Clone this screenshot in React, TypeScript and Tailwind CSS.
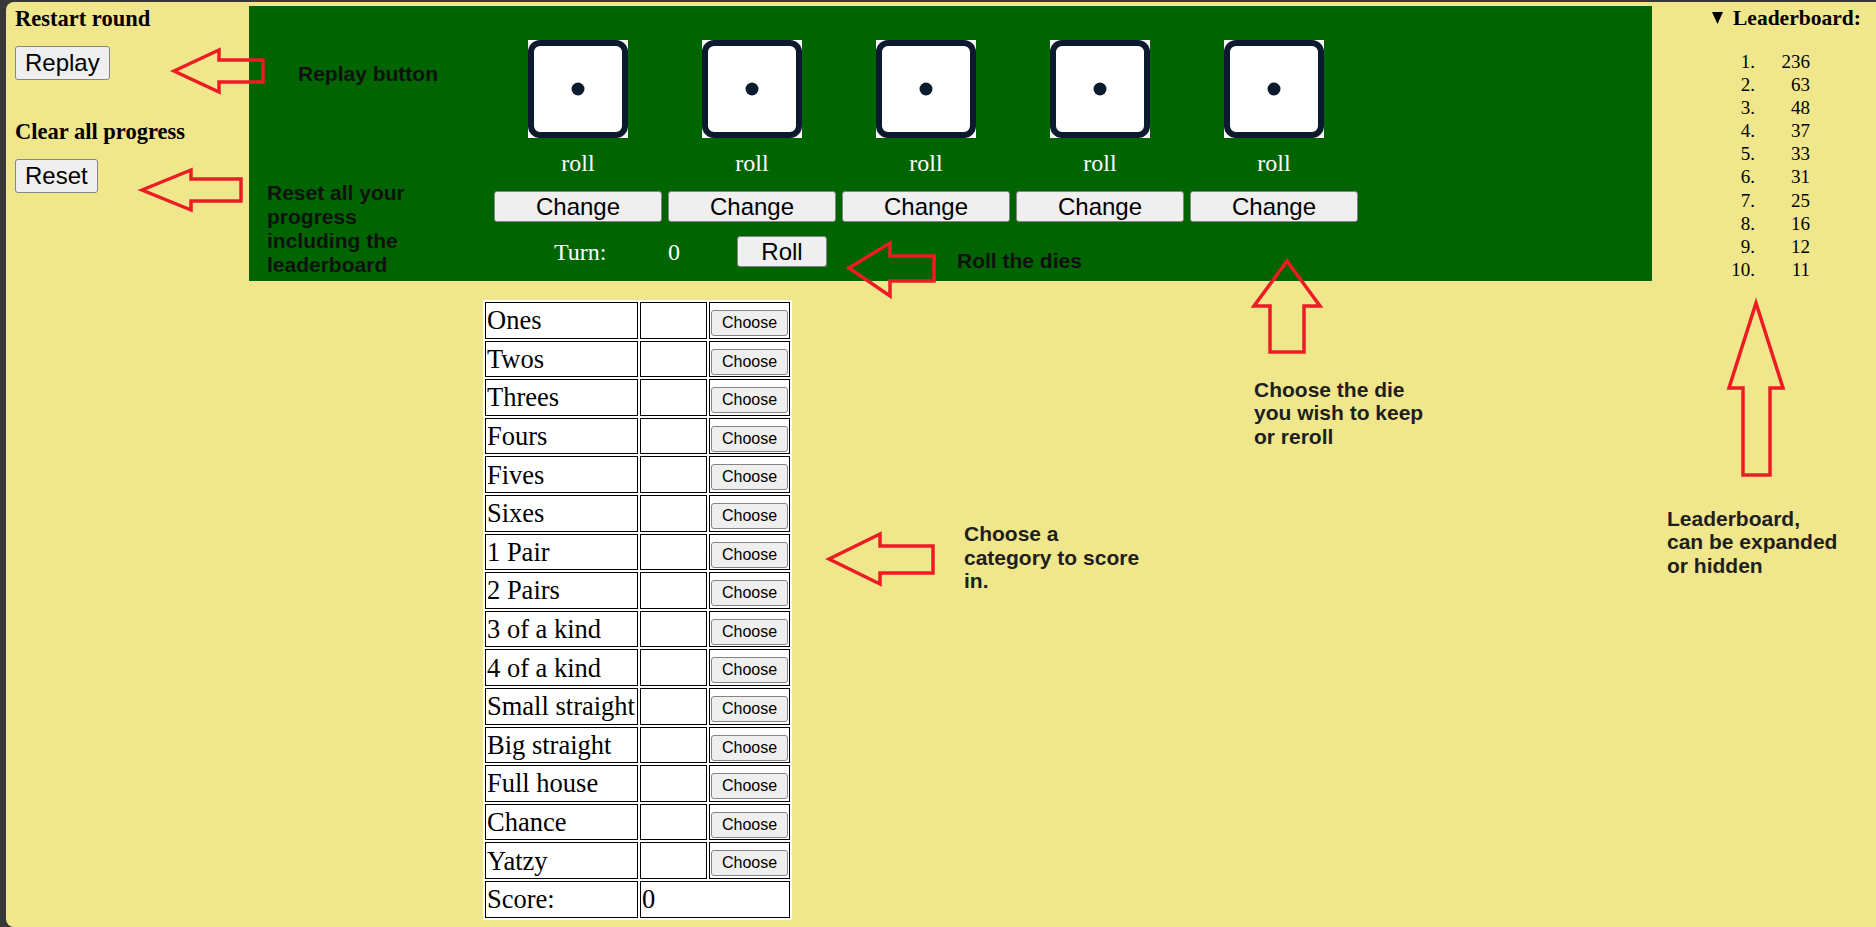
import React from 'react';

const scores = [236, 63, 48, 37, 33, 31, 25, 16, 12, 11];

const categories = [
  'Ones',
  'Twos',
  'Threes',
  'Fours',
  'Fives',
  'Sixes',
  '1 Pair',
  '2 Pairs',
  '3 of a kind',
  '4 of a kind',
  'Small straight',
  'Big straight',
  'Full house',
  'Chance',
  'Yatzy',
];

const btn =
  "bg-[#efefef] border border-[#858585] rounded-[3px] font-['Liberation_Sans',Arial,sans-serif] text-black";

function Die() {
  return (
    <svg width="100" height="98" viewBox="0 0 100 98">
      <rect width="100" height="98" fill="#ffffff" />
      <rect x="3" y="3" width="94" height="92" rx="9" fill="#ffffff" stroke="#0c1a2e" strokeWidth="6" />
      <circle cx="50" cy="49" r="6.5" fill="#0c1a2e" />
    </svg>
  );
}

function Arrows() {
  return (
    <svg className="pointer-events-none absolute left-0 top-0" width="1876" height="927" viewBox="0 0 1876 927">
      <g fill="none" stroke="#ed1c24" strokeWidth="3.5" strokeLinejoin="miter">
        {/* replay */}
        <polygon points="174,71 219,50 219,60 263,60 263,82 219,82 219,92" />
        {/* reset */}
        <polygon points="142,190 191,170 191,179 241,179 241,201 191,201 191,210" />
        {/* roll */}
        <polygon points="849,268 890,243 890,256 934,256 934,281 890,281 890,296" />
        {/* dice */}
        <polygon points="1287,261 1320,306 1304,306 1304,352 1270,352 1270,306 1254,306" />
        {/* category */}
        <polygon points="829,559 880,534 880,546 933,546 933,573 880,573 880,584" />
        {/* leaderboard */}
        <polygon points="1756,303 1783,388 1770,388 1770,475 1743,475 1743,388 1729,388" />
      </g>
    </svg>
  );
}

export default function App() {
  return (
    <div className="relative h-[927px] w-[1876px] overflow-hidden bg-[#383838] pl-[6px] pt-[2px] font-['Liberation_Serif','Times_New_Roman',serif] text-black">
      <div className="h-full rounded-bl-[8px] rounded-tl-[8px] bg-[#f0e68c]">
        <div className="flex h-[279px]">
          {/* left controls */}
          <div className="w-[243px] shrink-0 pl-[9px] pt-[4.4px]">
            <h3 className="text-[22.5px] font-bold leading-[26px]">Restart round</h3>
            <button className={`${btn} mt-[13.6px] block h-[34px] px-[9px] text-[24px] leading-[28px]`}>Replay</button>
            <h3 className="mt-[39.4px] text-[22.5px] font-bold leading-[26px]">Clear all progress</h3>
            <button className={`${btn} mt-[13.6px] block h-[34px] px-[9px] text-[24px] leading-[28px]`}>Reset</button>
          </div>

          {/* board */}
          <div className="mt-[4px] h-[275px] w-[1403px] shrink-0 bg-[#006400] pl-[245px] pt-[34px]">
            <div className="flex gap-[6px]">
              {[0, 1, 2, 3, 4].map((i) => (
                <div key={i} className="flex w-[168px] flex-col items-center">
                  <Die />
                  <div className="mt-[11px] text-[24px] leading-[28px] text-white">roll</div>
                  <button className={`${btn} mt-[14px] h-[31px] w-[168px] rounded-[2px] text-[24px] leading-[28px]`}>
                    Change
                  </button>
                </div>
              ))}
            </div>
            <div className="mt-[14px] flex h-[31px] items-center pl-[60px] text-[24px] leading-[28px] text-white">
              <span className="w-[114px]">Turn:</span>
              <span className="w-[69px]">0</span>
              <button className={`${btn} h-[31px] w-[90px] rounded-[2px] text-[24px] leading-[28px]`}>Roll</button>
            </div>
          </div>

          {/* leaderboard */}
          <div className="ml-[60px] shrink-0 pt-[2.7px]">
            <div className="flex h-[26px] items-center">
              <svg width="11" height="12" viewBox="0 0 11 12">
                <polygon points="0,0 11,0 5.5,12" fill="#000" />
              </svg>
              <span className="ml-[10px] whitespace-nowrap text-[21.5px] font-bold leading-[26px]">Leaderboard:</span>
            </div>
            <div className="mt-[19.3px] grid grid-cols-[43px_55px] text-right text-[19px] leading-[23.1px]">
              {scores.map((s, i) => (
                <React.Fragment key={i}>
                  <span>{i + 1}.</span>
                  <span>{s}</span>
                </React.Fragment>
              ))}
            </div>
          </div>
        </div>

        {/* score table */}
        <div className="ml-[477px] mt-[19px] grid w-[309px] grid-cols-[153px_67px_81px] gap-[2px] bg-white p-[2px] text-[26.5px] leading-[30px]">
          {categories.map((c) => (
            <React.Fragment key={c}>
              <div className="flex h-[36.6px] items-center whitespace-nowrap border border-black pl-[1px]">{c}</div>
              <div className="h-[36.6px] border border-black" />
              <div className="flex h-[36.6px] items-end justify-center border border-black pb-[1.5px]">
                <button className={`${btn} h-[26px] w-[77px] text-[16px] leading-[18px]`}>Choose</button>
              </div>
            </React.Fragment>
          ))}
          <div className="flex h-[36.6px] items-center border border-black pl-[1px]">Score:</div>
          <div className="col-span-2 flex h-[36.6px] items-center border border-black pl-[1px]">0</div>
        </div>
      </div>

      {/* annotations */}
      <Arrows />
      <div className="absolute left-[298px] top-[62px] whitespace-nowrap font-['Liberation_Sans',Arial,sans-serif] text-[21px] font-bold leading-[23.5px] text-[#111]">
        Replay button
      </div>
      <div className="absolute left-[267px] top-[181px] whitespace-nowrap font-['Liberation_Sans',Arial,sans-serif] text-[21px] font-bold leading-[24px] text-[#111]">
        Reset all your
        <br />
        progress
        <br />
        including the
        <br />
        leaderboard
      </div>
      <div className="absolute left-[957px] top-[249px] whitespace-nowrap font-['Liberation_Sans',Arial,sans-serif] text-[21px] font-bold leading-[23.5px] text-[#111]">
        Roll the dies
      </div>
      <div className="absolute left-[1254px] top-[377.5px] whitespace-nowrap font-['Liberation_Sans',Arial,sans-serif] text-[21px] font-bold leading-[23.8px] text-[#1e1e1e]">
        Choose the die
        <br />
        you wish to keep
        <br />
        or reroll
      </div>
      <div className="absolute left-[964px] top-[522px] whitespace-nowrap font-['Liberation_Sans',Arial,sans-serif] text-[21px] font-bold leading-[23.7px] text-[#1e1e1e]">
        Choose a
        <br />
        category to score
        <br />
        in.
      </div>
      <div className="absolute left-[1667px] top-[507px] whitespace-nowrap font-['Liberation_Sans',Arial,sans-serif] text-[21px] font-bold leading-[23.3px] text-[#1e1e1e]">
        Leaderboard,
        <br />
        can be expanded
        <br />
        or hidden
      </div>
    </div>
  );
}
